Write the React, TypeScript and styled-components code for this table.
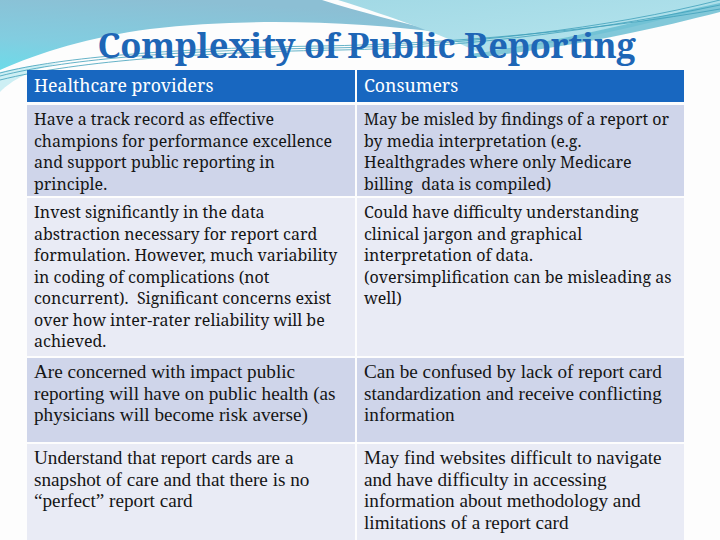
import styled, { createGlobalStyle } from "styled-components";

const GlobalStyle = createGlobalStyle`
  html, body {
    margin: 0;
    padding: 0;
    background: #fdfdfd;
  }
  * {
    box-sizing: border-box;
  }
`;

const serif = `"Noto Serif", "DejaVu Serif", serif`;
const narrowSerif = `"Liberation Serif", "Times New Roman", serif`;

const Slide = styled.div`
  position: relative;
  width: 720px;
  height: 540px;
  overflow: hidden;
  background: #fdfdfd;
  font-family: ${serif};
`;

const Swoosh = styled.svg`
  position: absolute;
  top: 0;
  left: 0;
  z-index: 0;
`;

const Content = styled.div`
  position: relative;
  z-index: 1;
  display: flex;
  flex-direction: column;
  padding: 24px 36px 0 27px;
`;

const Title = styled.h1`
  margin: 0 0 4px 0;
  padding-left: 22px;
  height: 42px;
  text-align: center;
  font-family: ${serif};
  font-size: 34.5px;
  line-height: 42px;
  font-weight: 700;
  color: #1e66b6;
  letter-spacing: -0.3px;
  white-space: nowrap;
`;

const Table = styled.div`
  display: grid;
  grid-template-columns: 328px 327px;
  grid-template-rows: 33px 91px 158px 84px 100px;
  column-gap: 2px;
  row-gap: 2px;
  width: 657px;
`;

const HeadCell = styled.div`
  background: #1867c0;
  color: #fff;
  font-family: ${serif};
  font-size: 17.7px;
  line-height: 31px;
  padding: 0 7px;
  margin-bottom: 1px;
`;

const Cell = styled.div<{ $even: boolean; $narrow?: boolean }>`
  background: ${(p) => (p.$even ? "#e9ebf5" : "#cfd5ea")};
  color: #151515;
  font-family: ${(p) => (p.$narrow ? narrowSerif : serif)};
  font-size: ${(p) => (p.$narrow ? "19.2px" : "16px")};
  line-height: 21.5px;
  padding: ${(p) => (p.$narrow ? "3px 7px 0" : "4px 7px 0")};
`;

const Line = styled.span`
  display: block;
  white-space: pre;
`;

const rows: { left: string[]; right: string[]; narrow?: boolean }[] = [
  {
    left: [
      "Have a track record as effective",
      "champions for performance excellence",
      "and support public reporting in",
      "principle.",
    ],
    right: [
      "May be misled by findings of a report or",
      "by media interpretation (e.g.",
      "Healthgrades where only Medicare",
      "billing  data is compiled)",
    ],
  },
  {
    left: [
      "Invest significantly in the data",
      "abstraction necessary for report card",
      "formulation. However, much variability",
      "in coding of complications (not",
      "concurrent).  Significant concerns exist",
      "over how inter-rater reliability will be",
      "achieved.",
    ],
    right: [
      "Could have difficulty understanding",
      "clinical jargon and graphical",
      "interpretation of data.",
      "(oversimplification can be misleading as",
      "well)",
    ],
  },
  {
    narrow: true,
    left: [
      "Are concerned with impact public",
      "reporting will have on public health (as",
      "physicians will become risk averse)",
    ],
    right: [
      "Can be confused by lack of report card",
      "standardization and receive conflicting",
      "information",
    ],
  },
  {
    narrow: true,
    left: [
      "Understand that report cards are a",
      "snapshot of care and that there is no",
      "\u201cperfect\u201d report card",
    ],
    right: [
      "May find websites difficult to navigate",
      "and have difficulty in accessing",
      "information about methodology and",
      "limitations of a report card",
    ],
  },
];

function Decoration() {
  return (
    <Swoosh width="720" height="110" viewBox="0 0 720 110">
      <defs>
        <linearGradient id="tealLeft" x1="0.4" y1="0" x2="0" y2="1">
          <stop offset="0" stopColor="#8cbfd4" />
          <stop offset="0.6" stopColor="#82cde0" />
          <stop offset="1" stopColor="#6ddbe9" />
        </linearGradient>
        <linearGradient id="cyanRight" x1="0" y1="0" x2="1" y2="1">
          <stop offset="0" stopColor="#a2d9e5" />
          <stop offset="1" stopColor="#b6e5ee" />
        </linearGradient>
      </defs>
      <path
        d="M0,0 H322 C360,12 400,22 445,33 C360,22 250,17 150,29 C90,37 40,52 0,70 Z"
        fill="url(#tealLeft)"
      />
      <path
        d="M338,0 H720 V4 C650,24 560,46 478,52 C450,38 390,16 338,0 Z"
        fill="url(#cyanRight)"
      />
      <path
        d="M470,54 C570,40 650,18 720,3 V12 C650,30 570,48 470,58 Z"
        fill="#63bad0"
        opacity="0.8"
      />
      <path d="M0,72 C20,67 40,64 60,63 C30,70 12,80 0,92 Z" fill="#cdeff4" />
      <g fill="none" stroke="#3f9fba" strokeWidth="0.8">
        <path d="M0,76 C70,58 190,50 330,48 C460,46 610,28 720,0" />
        <path d="M0,80 C80,60 210,52 340,50 C470,48 620,26 720,5" />
        <path d="M0,73 C60,57 180,48 320,46 C450,44 600,30 720,9" />
      </g>
    </Swoosh>
  );
}

export default function App() {
  return (
    <Slide>
      <GlobalStyle />
      <Decoration />
      <Content>
        <Title>Complexity of Public Reporting</Title>
        <Table>
          <HeadCell>Healthcare providers</HeadCell>
          <HeadCell>Consumers</HeadCell>
          {rows.map((row, idx) => [
            <Cell key={`l${idx}`} $even={idx % 2 === 1} $narrow={row.narrow}>
              {row.left.map((t) => (
                <Line key={t}>{t}</Line>
              ))}
            </Cell>,
            <Cell key={`r${idx}`} $even={idx % 2 === 1} $narrow={row.narrow}>
              {row.right.map((t) => (
                <Line key={t}>{t}</Line>
              ))}
            </Cell>,
          ])}
        </Table>
      </Content>
    </Slide>
  );
}
